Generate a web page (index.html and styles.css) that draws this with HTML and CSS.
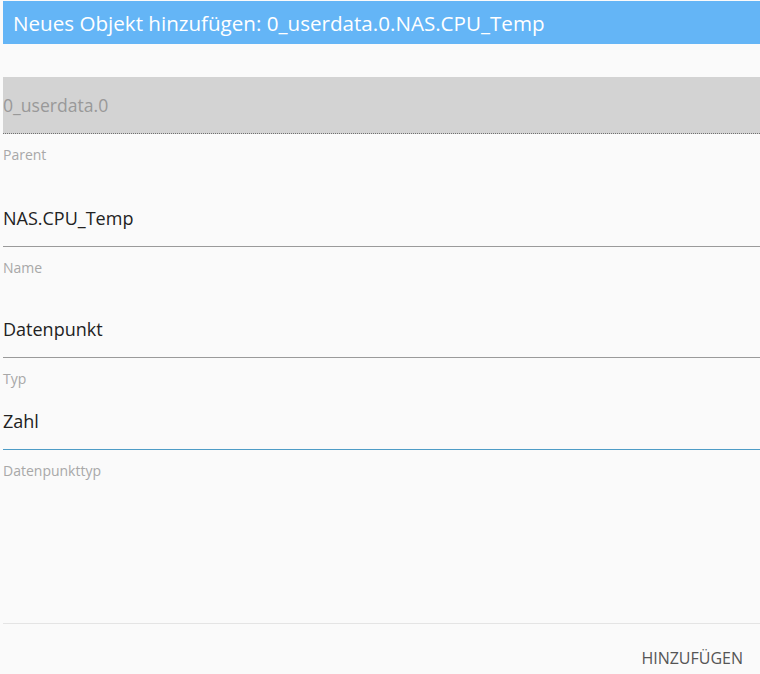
FILE: index.html
```html
<!DOCTYPE html>
<html>
<head>
<meta charset="utf-8">
<link rel="stylesheet" href="styles.css">
</head>
<body>
<div class="dialog">
  <div class="title">Neues Objekt hinzufügen: 0_userdata.0.NAS.CPU_Temp</div>
  <div class="content">
    <div class="field disabled">
      <div class="input"><span>0_userdata.0</span></div>
      <div class="label">Parent</div>
    </div>
    <div class="field name">
      <div class="input"><span>NAS.CPU_Temp</span></div>
      <div class="label">Name</div>
    </div>
    <div class="field type">
      <div class="input"><span>Datenpunkt</span></div>
      <div class="label">Typ</div>
    </div>
    <div class="field focus">
      <div class="input"><span>Zahl</span></div>
      <div class="label">Datenpunkttyp</div>
    </div>
  </div>
  <div class="actions">
    <button class="btn">HINZUFÜGEN</button>
  </div>
</div>
</body>
</html>
```
FILE: styles.css
```css
html, body {
  margin: 0;
  padding: 0;
  background: #fafafa;
}
body {
  font-family: "Open Sans", "Noto Sans", sans-serif;
  width: 760px;
  height: 674px;
  overflow: hidden;
}
.dialog {
  display: flex;
  flex-direction: column;
  height: 674px;
  padding-left: 3px;
  box-sizing: border-box;
}
.title {
  margin-top: 1px;
  height: 43px;
  box-sizing: border-box;
  background: #64b5f6;
  color: #fff;
  font-size: 20.6px;
  line-height: 43px;
  padding: 1px 0 0 10px;
  white-space: nowrap;
}
.content {
  flex: 1;
  padding-top: 33px;
}
.input {
  display: flex;
  align-items: flex-end;
  box-sizing: border-box;
  height: 57px;
  padding-bottom: 16px;
  border-bottom: 1px solid #9a9a9a;
  font-size: 18px;
  color: #222;
}
.name .input { height: 82px; }
.type .input { height: 80px; }
.focus .input { height: 61px; border-bottom: 1px solid #4e9cc6; }
.disabled .input {
  align-items: center;
  padding-bottom: 0;
  background: #d3d3d3;
  color: #999;
  font-size: 17.6px;
  border-bottom: 1px dotted #707070;
}
.label {
  font-size: 14px;
  color: #a8a8a8;
  height: 20px;
  line-height: 20px;
  margin-top: 11px;
}
.actions {
  border-top: 1px solid #e4e4e4;
  height: 50px;
  display: flex;
  justify-content: flex-end;
  align-items: center;
}
.btn {
  background: none;
  border: none;
  font-family: inherit;
  font-size: 16px;
  color: #555;
  padding: 0 17px 0 0;
  margin-top: 18px;
}
```
